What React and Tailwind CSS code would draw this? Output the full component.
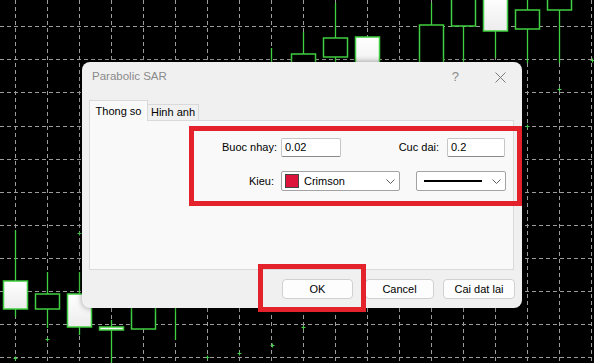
import React from 'react';

const GREEN = '#40cf40';

// candles: x = centre, bt/bb = body top/bottom, wt/wb = wick top/bottom, w = white body
const candles = [
  { x: 271, wt: 48, wb: 70 },
  { x: 303, bt: 54, bb: 75, wt: 32, wb: 75 },
  { x: 335, bt: 38, bb: 57, wt: 3, wb: 75 },
  { x: 367, bt: 37, bb: 75, w: true },
  { x: 431, bt: 25, bb: 75, wt: 3, wb: 75 },
  { x: 463, bt: -3, bb: 26, wt: 26, wb: 75 },
  { x: 495, bt: -3, bb: 31, wt: 31, wb: 58, w: true },
  { x: 527, bt: 10, bb: 29, wt: -2, wb: 63 },
  { x: 559, bt: -3, bb: 10, wt: 10, wb: 63 },
  { x: 15, bt: 281, bb: 309, wt: 230, wb: 317, w: true },
  { x: 47, bt: 294, bb: 309, wt: 272, wb: 328 },
  { x: 79, bt: 294, bb: 327, wt: 272, wb: 335, w: true },
  { x: 111, bt: 327, bb: 330, wt: 320, wb: 370, w: true },
  { x: 143, bt: 300, bb: 329 },
  { x: 175, wt: 300, wb: 340 },
];

const dots = [
  [15, 358], [47, 339], [79, 233], [207, 357], [239, 353], [272, 345],
  [303, 327], [527, 126], [559, 89], [592, 60],
];

const gridX = Array.from({ length: 19 }, (_, i) => 15 + i * 32);
const gridY = [26, 59, 92, 126, 159, 192, 225, 258, 291, 324, 357];

function Chart() {
  return (
    <svg className="absolute inset-0" width="594" height="363" viewBox="0 0 594 363">
      <defs>
        <linearGradient id="wb" x1="0" y1="0" x2="0" y2="1">
          <stop offset="0" stopColor="#ffffff" />
          <stop offset="1" stopColor="#ececec" />
        </linearGradient>
      </defs>
      {gridX.map((x) => (
        <line key={'x' + x} x1={x + 0.5} y1="0" x2={x + 0.5} y2="363" stroke="#9c9c9c" strokeDasharray="4 3" />
      ))}
      {gridY.map((y) => (
        <line key={'y' + y} x1="0" y1={y + 0.5} x2="594" y2={y + 0.5} stroke="#9c9c9c" strokeDasharray="4 3" />
      ))}
      {candles.map((c, i) => (
        <g key={i}>
          {c.wt != null && (
            <line x1={c.x + 0.5} y1={c.wt} x2={c.x + 0.5} y2={c.wb} stroke={GREEN} strokeWidth="1.3" />
          )}
          {c.bt != null && (
            <rect
              x={c.x - 11.5}
              y={c.bt}
              width="24"
              height={c.bb - c.bt}
              fill={c.w ? 'url(#wb)' : '#000'}
              stroke={GREEN}
              strokeWidth="1.5"
            />
          )}
        </g>
      ))}
      {dots.map(([x, y]) => (
        <g key={x + '-' + y} stroke={GREEN} strokeWidth="1">
          <line x1={x - 1.5} y1={y + 0.5} x2={x + 2.5} y2={y + 0.5} />
          <line x1={x + 0.5} y1={y - 1.5} x2={x + 0.5} y2={y + 2.5} />
        </g>
      ))}
    </svg>
  );
}

function Chevron() {
  return (
    <svg width="9" height="5" viewBox="0 0 9 5" className="shrink-0">
      <path d="M0.5 0.5 L4.5 4.5 L8.5 0.5" fill="none" stroke="#5f5f5f" strokeWidth="1" />
    </svg>
  );
}

export default function App() {
  return (
    <div className="relative w-[594px] h-[363px] overflow-hidden bg-black font-['Liberation_Sans',Arial,sans-serif] text-[11px] text-black">
      <Chart />

      {/* Dialog */}
      <div className="relative ml-[82px] mt-[62px] w-[440px] h-[246px] rounded-[8px] bg-[#f0f0f0] shadow-[0_0_6px_rgba(0,0,0,0.4)] flex flex-col">
        {/* Title bar */}
        <div className="h-[30px] flex items-center pl-[10px] pr-[16px] text-[11.5px] text-[#8a8a8a]">
          <span className="flex-1">Parabolic SAR</span>
          <span className="mr-[36px] text-[13px] text-[#8a8a8a]">?</span>
          <svg width="11" height="11" viewBox="0 0 11 11">
            <path d="M0.5 0.5 L10.5 10.5 M10.5 0.5 L0.5 10.5" stroke="#7a7a7a" strokeWidth="1" />
          </svg>
        </div>

        {/* Tabs */}
        <div className="mt-[8px] ml-[7px] mr-[8px]">
          <div className="flex items-end h-[20px]">
            <div className="relative z-10 -mb-px h-[21px] w-[59px] flex items-center justify-center bg-[#f9f9f9] border border-b-0 border-[#d9d9d9]">
              Thong so
            </div>
            <div className="h-[16px] w-[51px] flex items-center justify-center bg-[#f0f0f0] border border-b-0 border-l-0 border-[#d9d9d9]">
              Hinh anh
            </div>
          </div>

          {/* Panel */}
          <div className="h-[150px] border border-[#dadada] bg-[#f9f9f9] pt-[17px] flex flex-col gap-[14px]">
            <div className="flex items-center h-[19px]">
              <div className="w-[191px] text-right pr-[4px]">Buoc nhay:</div>
              <div className="w-[60px] h-[19px] border border-[#c6c6c6] border-b-[#8a8a8a] bg-white rounded-[2px] pl-[3px] flex items-center">
                0.02
              </div>
              <div className="w-[106px] text-right pr-[8px]">Cuc dai:</div>
              <div className="w-[58px] h-[19px] border border-[#c6c6c6] border-b-[#8a8a8a] bg-white rounded-[2px] pl-[3px] flex items-center">
                0.2
              </div>
            </div>
            <div className="flex items-center h-[20px]">
              <div className="w-[191px] text-right pr-[7px]">Kieu:</div>
              <div className="w-[119px] h-[20px] border border-[#a3a3a3] bg-white rounded-[2px] pl-[3px] pr-[4px] flex items-center">
                <span className="w-[14px] h-[14px] bg-[#dc143c] border border-[#444] shrink-0" />
                <span className="ml-[5px] flex-1">Crimson</span>
                <Chevron />
              </div>
              <div className="ml-[16px] w-[90px] h-[20px] border border-[#a3a3a3] bg-white rounded-[2px] pl-[7px] pr-[4px] flex items-center">
                <span className="w-[58px] h-[2px] bg-black" />
                <span className="flex-1" />
                <Chevron />
              </div>
            </div>
          </div>
        </div>

        {/* Buttons */}
        <div className="mt-[9px] flex justify-end pr-[7px]">
          <button className="w-[71px] h-[20px] bg-[#fdfdfd] border border-[#d0d0d0] rounded-[4px]">OK</button>
          <button className="ml-[12px] w-[69px] h-[20px] bg-[#fdfdfd] border border-[#d0d0d0] rounded-[4px]">Cancel</button>
          <button className="ml-[9px] w-[72px] h-[20px] bg-[#fdfdfd] border border-[#d0d0d0] rounded-[4px]">Cai dat lai</button>
        </div>

        {/* Red annotation boxes */}
        <div className="absolute left-[107px] top-[64px] w-[333px] h-[80px] border-[5px] border-[#e3222b]" />
        <div className="absolute left-[176px] top-[202px] w-[108px] h-[48px] border-[5px] border-[#e3222b]" />
      </div>
    </div>
  );
}
